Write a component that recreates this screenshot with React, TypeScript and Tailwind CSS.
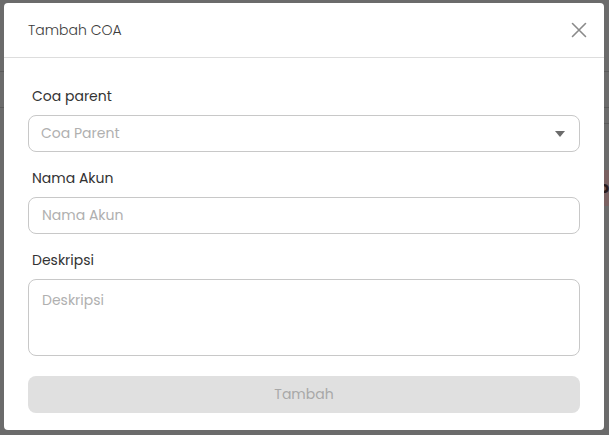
import React from "react";

export default function App() {
  const font = { fontFamily: "Poppins, 'Noto Sans', sans-serif" };
  return (
    <div className="relative w-[609px] h-[435px] overflow-hidden bg-[#6b6b6b]" style={font}>
      {/* background hints */}
      <div className="absolute left-0 top-[71px] w-full h-px bg-[#5a5a5a]" />
      <div className="absolute left-0 top-[107px] w-full h-px bg-[#5a5a5a]" />
      <div className="absolute right-0 top-[123px] w-[6px] h-px bg-[#5a5a5a]" />
      <div className="absolute right-0 top-[170px] w-[6px] h-[36px] bg-[#7a6161] text-[16px] font-bold text-[#2a1a1a] leading-[36px] overflow-hidden">
        <span className="ml-[-4px]">o</span>
      </div>

      <div className="absolute left-[4px] top-[3px] w-[600px] h-[427px] bg-white rounded-[4px] flex flex-col">
        <div className="h-[55px] flex items-center justify-between pl-6 pr-[17px] border-b border-[#dddddd] shrink-0">
          <span className="text-[14px] font-light text-[#3c3c3c]">Tambah COA</span>
          <svg width="16" height="16" viewBox="0 0 16 16">
            <path d="M1.5 1.5 L14.5 14.5 M14.5 1.5 L1.5 14.5" stroke="#8a8a8a" strokeWidth="1.6" strokeLinecap="round" />
          </svg>
        </div>

        <div className="flex flex-col px-6 pt-[27px]">
          <label className="pl-1 text-[14px] leading-[22px] text-[#333333]">Coa parent</label>
          <div className="mt-2 h-[37px] rounded-[8px] border border-[#c8c8c8] flex items-center justify-between pl-3 pr-[14px]">
            <span className="text-[14px] text-[#b0b0b0]">Coa Parent</span>
            <svg width="10" height="6" viewBox="0 0 10 6">
              <path d="M0 0 L10 0 L5 6 Z" fill="#6b6b6b" />
            </svg>
          </div>

          <label className="mt-[15px] pl-1 text-[14px] leading-[22px] text-[#333333]">Nama Akun</label>
          <div className="mt-2 h-[37px] rounded-[8px] border border-[#c8c8c8] flex items-center pl-[13px]">
            <span className="text-[14px] text-[#b0b0b0]">Nama Akun</span>
          </div>

          <label className="mt-[15px] pl-1 text-[14px] leading-[22px] text-[#333333]">Deskripsi</label>
          <div className="mt-2 h-[77px] rounded-[8px] border border-[#c8c8c8] pl-[13px] pt-[8px]">
            <span className="text-[14px] text-[#b0b0b0]">Deskripsi</span>
          </div>

          <div className="mt-[20px] h-[37px] rounded-[8px] bg-[#e0e0e0] flex items-center justify-center">
            <span className="text-[14px] text-[#a8a8a8]">Tambah</span>
          </div>
        </div>
      </div>
    </div>
  );
}
